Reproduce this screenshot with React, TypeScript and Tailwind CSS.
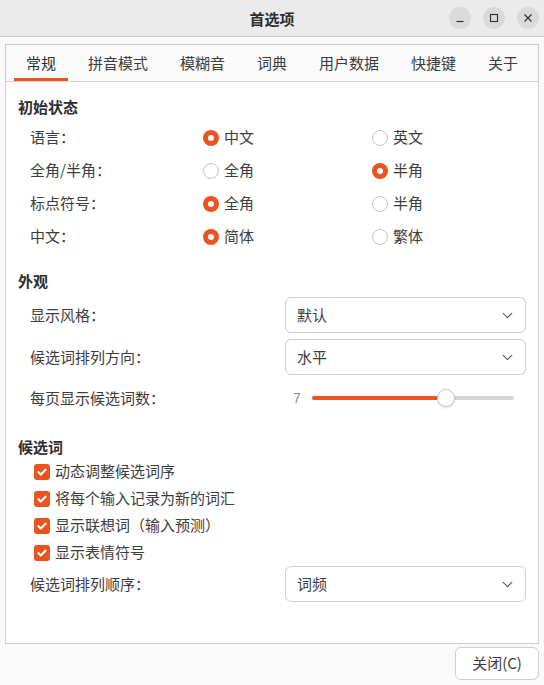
import { ChevronDown } from "lucide-react";

const tabs = ["常规", "拼音模式", "模糊音", "词典", "用户数据", "快捷键", "关于"];

const radioRows = [
  { label: "语言：", a: "中文", b: "英文", sel: 0 },
  { label: "全角/半角：", a: "全角", b: "半角", sel: 1 },
  { label: "标点符号：", a: "全角", b: "半角", sel: 0 },
  { label: "中文：", a: "简体", b: "繁体", sel: 0 },
];

const checks = [
  "动态调整候选词序",
  "将每个输入记录为新的词汇",
  "显示联想词（输入预测）",
  "显示表情符号",
];

function Radio({ on, text }: { on: boolean; text: string }) {
  return (
    <div className="flex items-center gap-[5px]">
      {on ? (
        <span className="w-4 h-4 rounded-full bg-[#e95420] flex items-center justify-center">
          <span className="w-[6px] h-[6px] rounded-full bg-white" />
        </span>
      ) : (
        <span className="w-4 h-4 rounded-full bg-white border border-[#c4c4c4]" />
      )}
      <span>{text}</span>
    </div>
  );
}

function Dropdown({ value }: { value: string }) {
  return (
    <div className="w-[241px] h-[36px] rounded-[6px] border border-[#cfcfcf] bg-white flex items-center justify-between pl-[11px] pr-[9px]">
      <span>{value}</span>
      <ChevronDown size={17} strokeWidth={1.6} className="text-[#5c5c5c]" />
    </div>
  );
}

function WinButton({ children }: { children: React.ReactNode }) {
  return (
    <div className="w-[22px] h-[22px] rounded-full bg-[#dadada] flex items-center justify-center">
      <svg width="16" height="16" viewBox="0 0 16 16" fill="none" stroke="#2e2e2e" strokeWidth="1.1">
        {children}
      </svg>
    </div>
  );
}

export default function App() {
  return (
    <div
      className="w-[544px] h-[685px] bg-[#fafafa] flex flex-col text-[15px] text-[#3d3d3d]"
      style={{ fontFamily: '"Noto Sans CJK SC", "Noto Sans", sans-serif' }}
    >
      {/* header bar */}
      <div className="h-[37px] shrink-0 bg-[#ebebeb] border-b border-[#cbcbcb] flex items-center justify-between px-[5px]">
        <div className="w-[90px]" />
        <div className="font-bold text-[#2e2e2e] pt-[2px]">首选项</div>
        <div className="flex gap-[12px] pb-px">
          <WinButton>
            <path d="M4.5 11.5h7" />
          </WinButton>
          <WinButton>
            <rect x="4.5" y="4.5" width="7" height="7" />
          </WinButton>
          <WinButton>
            <path d="M4.5 4.5l7 7M11.5 4.5l-7 7" />
          </WinButton>
        </div>
      </div>

      <div className="flex-1 flex flex-col px-[5px] pt-[7px]">
        {/* notebook */}
        <div className="h-[600px] border border-[#cdcdcd] flex flex-col">
          <div className="h-[37px] shrink-0 border-b border-[#d2d2d2] bg-[#fafafa] flex pl-[8px] gap-[8px]">
            {tabs.map((t, i) => (
              <div
                key={t}
                className={
                  i === 0
                    ? "px-[12px] h-full flex items-center pt-[3px] border-b-[3px] border-[#e95420] text-[#2e2e2e]"
                    : "px-[12px] h-full flex items-center"
                }
              >
                {t}
              </div>
            ))}
          </div>

          <div className="flex-1 bg-white pl-[12px] pr-[12px] pt-[14px]">
            <div className="h-[22px] leading-[22px] font-bold text-[#2e2e2e]">初始状态</div>
            <div className="mt-[3px] pl-[12px]">
              {radioRows.map((r) => (
                <div key={r.label} className="h-[33px] grid grid-cols-[173px_169px_1fr] items-center">
                  <span>{r.label}</span>
                  <Radio on={r.sel === 0} text={r.a} />
                  <Radio on={r.sel === 1} text={r.b} />
                </div>
              ))}
            </div>

            <div className="mt-[17px] h-[22px] leading-[22px] font-bold text-[#2e2e2e]">外观</div>
            <div className="mt-[5px] pl-[12px] flex items-center justify-between">
              <span>显示风格：</span>
              <Dropdown value="默认" />
            </div>
            <div className="mt-[6px] pl-[12px] flex items-center justify-between">
              <span>候选词排列方向：</span>
              <Dropdown value="水平" />
            </div>
            <div className="mt-[8px] h-[30px] pl-[12px] flex items-center justify-between">
              <span>每页显示候选词数：</span>
              <div className="w-[241px] flex items-center pl-[8px] pr-[12px]">
                <span className="text-[14px] text-[#8a8a8a] w-[19px]" style={{ fontFamily: '"Liberation Sans", sans-serif' }}>
                  7
                </span>
                <div className="relative flex-1 h-[4px] rounded-full bg-[#d6d6d6]">
                  <div className="h-full w-[134px] rounded-full bg-[#e95420]" />
                  <div className="absolute left-[125px] top-1/2 -translate-y-1/2 w-[18px] h-[18px] rounded-full bg-white border border-[#c8c8c8] shadow-sm" />
                </div>
              </div>
            </div>

            <div className="mt-[23px] h-[22px] leading-[22px] font-bold text-[#2e2e2e]">候选词</div>
            <div className="pl-[16px]">
              {checks.map((c) => (
                <div key={c} className="h-[27px] flex items-center gap-[5px]">
                  <span className="w-4 h-4 rounded-[3px] bg-[#e95420] flex items-center justify-center">
                    <svg width="12" height="12" viewBox="0 0 12 12" fill="none" stroke="white" strokeWidth="2.2" strokeLinecap="round" strokeLinejoin="round">
                      <path d="M2.5 6.2l2.3 2.3 4.7-4.8" />
                    </svg>
                  </span>
                  <span>{c}</span>
                </div>
              ))}
            </div>
            <div className="pl-[12px] flex items-center justify-between">
              <span>候选词排列顺序：</span>
              <Dropdown value="词频" />
            </div>
          </div>
        </div>

        <div className="flex justify-end pt-[3px]">
          <div className="w-[84px] h-[33px] rounded-[6px] border border-[#cfcfcf] bg-white flex items-center justify-center">
            关闭(C)
          </div>
        </div>
      </div>
    </div>
  );
}
